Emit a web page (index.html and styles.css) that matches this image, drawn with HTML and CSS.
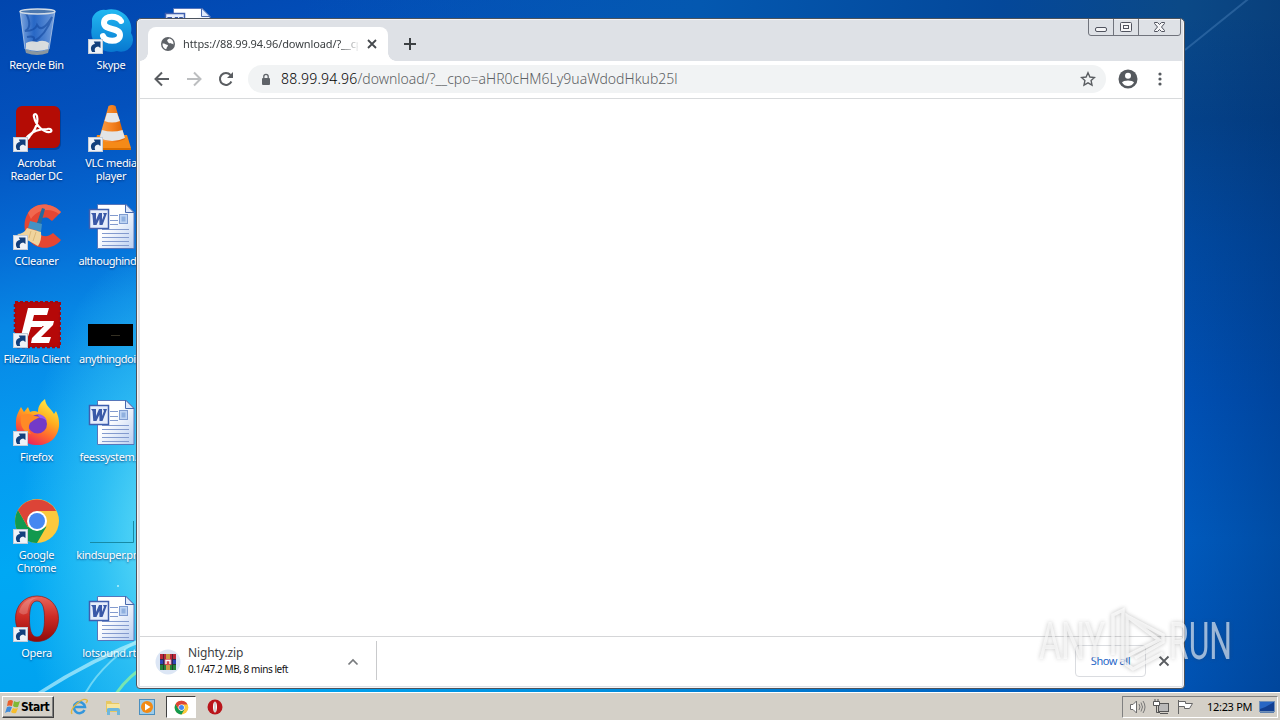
FILE: index.html
```html
<!DOCTYPE html>
<html lang="en">
<head>
  <meta charset="UTF-8">
  <title>Desktop</title>
  <link rel="stylesheet" href="styles.css">
</head>
<body>

  <svg class="defs" width="0" height="0">
    <defs>
      <linearGradient id="gSkype" x1="0" y1="0" x2="0" y2="1"><stop offset="0" stop-color="#22b9f2"/><stop offset="1" stop-color="#0878d0"/></linearGradient>
      <linearGradient id="gPage" x1="0" y1="0" x2="1" y2="1"><stop offset="0.4" stop-color="#fff"/><stop offset="1" stop-color="#b8cdf0"/></linearGradient>
      <linearGradient id="gCone" x1="0" y1="0" x2="1" y2="0"><stop offset="0" stop-color="#f9a04a"/><stop offset="0.5" stop-color="#f58220"/><stop offset="1" stop-color="#d96000"/></linearGradient>
      <linearGradient id="gOpera" x1="0" y1="0" x2="0" y2="1"><stop offset="0" stop-color="#e8675c"/><stop offset="0.45" stop-color="#cf2c25"/><stop offset="1" stop-color="#8f0a0a"/></linearGradient>
      <linearGradient id="gFox" x1="0.8" y1="0" x2="0.3" y2="1"><stop offset="0" stop-color="#fff04a"/><stop offset="0.4" stop-color="#ffae20"/><stop offset="0.7" stop-color="#ff6430"/><stop offset="1" stop-color="#e82060"/></linearGradient>
      <linearGradient id="gBin" x1="0" y1="0" x2="1" y2="0"><stop offset="0" stop-color="#bcd3f2" stop-opacity="0.7"/><stop offset="0.4" stop-color="#4f86d8" stop-opacity="0.5"/><stop offset="1" stop-color="#a9c5ee" stop-opacity="0.7"/></linearGradient>

      <symbol id="arrow" viewBox="0 0 15 15">
        <rect x="0.5" y="0.5" width="14" height="14" fill="#eef2f8" stroke="#c3ccd8"/>
        <path d="M4.200 13C1.800 9.500 3 5.600 7 5L5.800 2.500H12.500V9L10.200 7.600C7.600 7.800 6 9.800 7.200 13Z" fill="#123f7c"/>
      </symbol>

      <symbol id="word" viewBox="0 0 48 48">
        <path d="M10.500 1.500H39L47 9.500V45.500H10.500Z" fill="url(#gPage)" stroke="#5676ba"/>
        <path d="M38.500 1V9.500H47Z" fill="#dfe9fb" stroke="#4768ad"/>
        <path d="M23 12.500H31M23 17.500H31M23 21.500H31M15 26.500H42M15 30.500H42M15 34.500H42M15 38.500H42M15 42.500H42" stroke="#829ace"/>
        <rect x="32.500" y="11.500" width="8" height="9" fill="#bed4f3" stroke="#7e9bd0"/>
        <rect x="34.500" y="13.500" width="4" height="5" fill="#8fb0df"/>
        <rect x="2.500" y="6.500" width="19" height="19" fill="#e6edfb" stroke="#3f5fae" stroke-width="1.500"/>
        <path d="M4 10H9L9 17L12 10H15L15 17L17 12L16 10H20L15.500 22H12.500L12.300 16L9.500 22H6.300L5.500 12Z" fill="#3a59a8"/>
      </symbol>

      <symbol id="chrome" viewBox="0 0 48 48">
        <circle cx="24" cy="24" r="22" fill="#fbc93d"/>
        <path d="M5 13A22 22 0 0 0 24 46L33.500 29.500L24 34L14.500 29.500Z" fill="#12994e"/>
        <path d="M5 13L14.500 29.500L20 24L24 14H43.100A22 22 0 0 0 5 13Z" fill="#dc4437"/>
        <circle cx="24" cy="24" r="10" fill="#fff"/>
        <circle cx="24" cy="24" r="8" fill="#4688f1"/>
      </symbol>

      <symbol id="opera" viewBox="0 0 48 48">
        <path fill-rule="evenodd" d="M24 1C37 1 45.500 11 45.500 23.500S37 46.500 24 46.500S2.500 36 2.500 23.500S11 1 24 1ZM24 6C18 6 16.500 14 16.500 24S18 42 24 42S31.500 34 31.500 24S30 6 24 6Z" fill="url(#gOpera)" stroke="#8d1717" stroke-width="0.700"/>
        <path d="M6 17C9 5 20 2 25 3C17 3 15 12 14.500 18C12 20 8 20 6 17Z" fill="#fff" opacity="0.200"/>
      </symbol>
    </defs>
  </svg>

  <div class="desktop">
    <svg class="streaks" width="1280" height="692" viewBox="0 0 1280 692">
      <path d="M38 694Q90 660 150 637" stroke="#d6fbff" stroke-width="3.500" opacity="0.600" fill="none"/>
      <path d="M85 694Q102 662 150 632" stroke="#a5eff8" stroke-width="2" opacity="0.600" fill="none"/>
      <path d="M116 694Q126 678 150 662" stroke="#8df0a0" stroke-width="3" opacity="0.800" fill="none"/>
      <path d="M1185 50L1252 -4" stroke="#5d93cb" stroke-width="2" opacity="0.350"/>
      <circle cx="118" cy="586" r="1" fill="#b9f2fb"/>
    </svg>

    <div class="icons">
      <div class="column">
        <div class="icon">
          <svg viewBox="0 0 48 48">
            <path d="M7 4L12 42Q24 49 36 42L42 4Z" fill="url(#gBin)" stroke="#b3c9e8" stroke-width="0.800"/>
            <path d="M13 6Q20 20 12 24Q22 24 24 18Q29 27 39 10Q33 28 20 35Q24 28 14 30" fill="none" stroke="#12479f" stroke-width="2" opacity="0.600"/>
            <path d="M13 36Q18 33 24 35Q30 32 36 36L35 42Q24 46 13 42Z" fill="#e9e7df" opacity="0.900"/>
            <path d="M12 42Q24 47 36 42L35 46Q24 50 13 46Z" fill="#8b979f"/>
            <ellipse cx="24.500" cy="4.500" rx="17.500" ry="2.500" fill="#4d78ae" stroke="#d3dce6" stroke-width="1.300"/>
          </svg>
          <span>Recycle Bin</span>
        </div>
        <div class="icon">
          <svg viewBox="0 0 48 48">
            <rect x="3" y="2" width="45" height="43" rx="6" fill="#002d76" opacity="0.500"/>
            <rect x="3" y="1" width="44" height="42" rx="6" fill="#b40c05"/>
            <path d="M13 33C20 30 26 19 24 11C23 8 20 9 21 12C23 21 31 28 37 27C40 26 38 23 34 24C26 24 19 27 15 31C11 35 14 36 17 31" fill="none" stroke="#fff" stroke-width="2.200"/>
            <use href="#arrow" x="0" y="32" width="15" height="15"/>
          </svg>
          <span>Acrobat<br>Reader DC</span>
        </div>
        <div class="icon">
          <svg viewBox="0 0 48 48">
            <path d="M48 9C37-2 21 0 15 10C8 21 12 38 23 43C32 47 43 44 48 37L40 30C35 35 26 34 24 27C22 19 28 13 35 15L39 18Z" fill="#e64632"/>
            <path d="M48 9C37-2 21 0 15 10L18 16C25 5 38 5 46 11Z" fill="#f1684f"/>
            <path d="M29 5L32 6L28 21L24 20Z" fill="#246b9e"/>
            <path d="M17 18L29 21L28 29L15 25Z" fill="#4293c5"/>
            <path d="M14 25L28 29Q29 37 25 43L16 38L4 31Q11 31 14 25Z" fill="#f0d49d"/>
            <path d="M18 28L16 35M23 29L20 38" stroke="#dcb878"/>
            <use href="#arrow" x="0" y="32" width="15" height="15"/>
          </svg>
          <span>CCleaner</span>
        </div>
        <div class="icon">
          <svg viewBox="0 0 48 48">
            <rect x="2" y="1" width="45" height="45" fill="#b50808" stroke="#a30810" stroke-width="2.500" stroke-dasharray="3 2"/>
            <path d="M15 7H36L34 14H21L19.500 20H31L29 26H18L14 39H7Z" fill="#fff"/>
            <path d="M26 20H41L40 24L28 36H38L36 42H18L19 37L31 25H25Z" fill="#fff"/>
            <use href="#arrow" x="0" y="32" width="15" height="15"/>
          </svg>
          <span>FileZilla Client</span>
        </div>
        <div class="icon">
          <svg viewBox="0 0 48 48">
            <path d="M25 46C10 46 2 36 3 23C3 16 6 12 8 8L11 13L15 8L17 13Q21 11 25 13C25 7 28 3 32 0C33 8 38 9 41 15L43 12C51 28 43 46 25 46Z" fill="url(#gFox)"/>
            <circle cx="24.500" cy="25" r="9.500" fill="#733ac8"/>
            <path d="M8 17Q15 13 22 17L27 18Q22 20 17 24Q14 30 18 35Q6 32 8 17Z" fill="#ff8a26"/>
            <path d="M24 15Q32 15 34 23Q32 19 27 19Z" fill="#9a5bf0"/>
            <use href="#arrow" x="0" y="32" width="15" height="15"/>
          </svg>
          <span>Firefox</span>
        </div>
        <div class="icon">
          <svg viewBox="0 0 48 48">
            <use href="#chrome" width="48" height="48"/>
            <use href="#arrow" x="0" y="32" width="15" height="15"/>
          </svg>
          <span>Google<br>Chrome</span>
        </div>
        <div class="icon">
          <svg viewBox="0 0 48 48">
            <use href="#opera" width="48" height="48"/>
            <use href="#arrow" x="0" y="32" width="15" height="15"/>
          </svg>
          <span>Opera</span>
        </div>
      </div>

      <div class="column">
        <div class="icon">
          <svg viewBox="0 0 48 48">
            <path d="M5 12A12 12 0 0 1 19 3A20 20 0 0 1 44 26A12 12 0 0 1 30 44A20 20 0 0 1 5 20Z" fill="url(#gSkype)"/>
            <path d="M34 14C32 9 17 7 17 16C17 24 33 20 33 28C33 36 18 35 16 29" fill="none" stroke="#fff" stroke-width="6" stroke-linecap="round"/>
            <use href="#arrow" x="1" y="32" width="15" height="15"/>
          </svg>
          <span>Skype</span>
        </div>
        <div class="icon">
          <svg viewBox="0 0 48 48">
            <path d="M10 30H40L44 43H7Z" fill="#f58a18"/>
            <path d="M7 43H44V45H7Z" fill="#d96d00"/>
            <path d="M21.500 1Q25 -1 28.500 1L38 34Q25 41 12 34Z" fill="url(#gCone)"/>
            <path d="M20 8H30L33 16Q25 19 17.500 16Z" fill="#e8e8e8"/>
            <path d="M15 25Q25 28 35.500 25L38 33Q25 39 12.500 33Z" fill="#e2e4e6"/>
            <use href="#arrow" x="1" y="32" width="15" height="15"/>
          </svg>
          <span>VLC media<br>player</span>
        </div>
        <div class="icon file-icon">
          <svg viewBox="0 0 48 48"><use href="#word" width="48" height="48"/></svg>
          <span>althoughind...</span>
        </div>
        <div class="icon file-icon">
          <svg viewBox="0 0 48 48"><path d="M1 23H46V45H1Z"/><path d="M24 34.500H33" stroke="#343023"/></svg>
          <span>anythingdoi...</span>
        </div>
        <div class="icon">
          <svg viewBox="0 0 48 48"><use href="#word" width="48" height="48"/></svg>
          <span>feessystem...</span>
        </div>
        <div class="icon">
          <svg viewBox="0 0 48 48"><path d="M3 45.500H46.500V24" fill="none" stroke="#178aa5"/></svg>
          <span>kindsuper.png</span>
        </div>
        <div class="icon">
          <svg viewBox="0 0 48 48"><use href="#word" width="48" height="48"/></svg>
          <span>lotsound.rtf</span>
        </div>
      </div>

      <div class="column">
        <div class="icon">
          <svg viewBox="0 0 48 48"><use href="#word" width="48" height="48"/></svg>
        </div>
      </div>
    </div>

    <div class="window">
      <div class="tabstrip">
        <div class="tab">
          <svg width="16" height="16" viewBox="0 0 16 16">
            <circle cx="8" cy="8" r="7" fill="#5f6368"/>
            <path d="M2.500 7.500C4 7.200 5 7.500 6 8.500C8 8.500 8.500 9.500 7.500 10.500C6.500 11 7 12.500 6 13.200C3.800 12.500 2.200 10.500 2.500 7.500Z" fill="#fff"/>
            <path d="M9.500 2.600C8 3 7 4 7.200 5C8.200 5.500 7.500 6.500 9 7C10 8 12 7 13.500 8.500C13.800 5.500 12 3.200 9.500 2.600Z" fill="#fff"/>
          </svg>
          <span class="tab-title">https://88.99.94.96/download/?__cpo</span>
          <svg class="tab-close" width="10" height="10" viewBox="0 0 10 10"><path d="M1 1L9 9M9 1L1 9" stroke="#45494d" stroke-width="1.800"/></svg>
        </div>
        <svg class="new-tab" width="14" height="14" viewBox="0 0 14 14"><path d="M7 1V13M1 7H13" stroke="#3c4043" stroke-width="2"/></svg>
        <svg class="controls" width="94" height="18" viewBox="0 0 94 18">
          <path d="M0.500 0V14Q0.500 16.500 3 16.500H90Q92.500 16.500 92.500 14V0M25.500 0V16M50.500 0V16" fill="none" stroke="#70737c"/>
          <g fill="#f5f5f7" stroke="#50535e">
            <rect x="7.500" y="8.500" width="11" height="4" rx="1.500"/>
            <rect x="32.500" y="3.500" width="11" height="9" rx="1"/>
            <rect x="35.500" y="6.500" width="5" height="3"/>
            <path d="M66.500 3.500H69.500L71.500 5.500L73.500 3.500H76.500V4.500L73.500 8L76.500 11.500V12.500H73.500L71.500 10.500L69.500 12.500H66.500V11.500L69.500 8L66.500 4.500Z"/>
          </g>
        </svg>
      </div>

      <div class="toolbar">
        <svg width="16" height="16" viewBox="0 0 16 16"><path d="M15 8H2M8 1.500L1.500 8L8 14.500" fill="none" stroke="#5a5d61" stroke-width="2"/></svg>
        <svg width="16" height="16" viewBox="0 0 16 16"><path d="M1 8H14M8 1.500L14.500 8L8 14.500" fill="none" stroke="#bcbec0" stroke-width="2"/></svg>
        <svg width="16" height="16" viewBox="0 0 16 16"><path d="M13.400 10.500A6 6 0 1 1 12.500 4" fill="none" stroke="#5a5d61" stroke-width="2"/><path d="M15 1V7H9Z" fill="#5a5d61"/></svg>
        <div class="omnibox">
          <svg width="10" height="13" viewBox="0 0 10 13"><rect x="1" y="5" width="8" height="7" rx="1" fill="#5f6368"/><path d="M2.800 5V3.500A2.200 2.200 0 0 1 7.200 3.500V5" fill="none" stroke="#5f6368" stroke-width="1.300"/></svg>
          <span class="url"><b>88.99.94.96</b>/download/?__cpo=aHR0cHM6Ly9uaWdodHkub25l</span>
          <svg class="star" width="16" height="16" viewBox="0 0 16 16"><path d="M8 1.800L9.900 6L14.500 6.500L11.100 9.600L12 14.100L8 11.800L4 14.100L4.900 9.600L1.500 6.500L6.100 6Z" fill="none" stroke="#5a5d61" stroke-width="1.400"/></svg>
        </div>
        <svg class="avatar" width="20" height="20" viewBox="0 0 20 20"><circle cx="10" cy="10" r="9.500" fill="#55595e"/><circle cx="10" cy="6.700" r="3" fill="#fff"/><path d="M4 13.500C5 10.800 15 10.800 16 13.500C14.500 16 12.500 17 10 17S5.500 16 4 13.500Z" fill="#fff"/></svg>
        <svg width="4" height="16" viewBox="0 0 4 16" fill="#55595e"><circle cx="2" cy="3" r="1.600"/><circle cx="2" cy="8" r="1.600"/><circle cx="2" cy="13" r="1.600"/></svg>
      </div>

      <div class="page"></div>

      <div class="downloads">
        <div class="download">
          <svg width="26" height="26" viewBox="0 0 26 26">
            <circle cx="13" cy="13" r="12.500" fill="#dce6f5"/>
            <rect x="5" y="5" width="16" height="5" fill="#b9283b"/>
            <rect x="5" y="10" width="16" height="5" fill="#2f45b5"/>
            <rect x="5" y="15" width="16" height="6" fill="#248239"/>
            <path d="M5 10.500H21M5 15.500H21M8.500 5V21M17.500 5V21" stroke="#27212c" opacity="0.700"/>
            <rect x="11" y="5" width="4" height="16" fill="#c99a46"/>
            <rect x="9.500" y="10" width="7" height="6" fill="#d74852"/>
            <path d="M11 15V11.500H15V15" fill="none" stroke="#fff" stroke-width="1.400"/>
          </svg>
          <div class="download-text">
            <div class="file">Nighty.zip</div>
            <div class="status">0.1/47.2 MB, 8 mins left</div>
          </div>
          <svg class="chevron" width="12" height="8" viewBox="0 0 12 8"><path d="M1.500 6.500L6 2L10.500 6.500" fill="none" stroke="#777a7d" stroke-width="1.700"/></svg>
        </div>
        <button class="show-all">Show all</button>
        <svg class="bar-close" width="12" height="12" viewBox="0 0 12 12"><path d="M1.500 1.500L10.500 10.500M10.500 1.500L1.500 10.500" stroke="#5a5d61" stroke-width="1.800"/></svg>
      </div>
    </div>

    <svg class="watermark" width="210" height="76" viewBox="0 0 210 76">
      <g class="mark">
        <text x="3" y="55" textLength="66" lengthAdjust="spacingAndGlyphs">ANY</text>
        <text x="133" y="55" textLength="63" lengthAdjust="spacingAndGlyphs">RUN</text>
        <path class="play" d="M77 51V11L87 6V58L97 65L127 49M91 12V52L123 36ZM91 12L127 31V38L99 54"/>
      </g>
    </svg>
  </div>

  <div class="taskbar">
    <div class="start">
      <svg width="16" height="16" viewBox="0 0 16 16"><path d="M3 2Q6 0 8 2L7 7Q4 6 2 7Z" fill="#e8602c"/><path d="M9 2Q12 4 15 2L13 8Q10 9 8 7Z" fill="#80b836"/><path d="M2 8Q4 7 7 8L5 13Q3 12 0 14Z" fill="#3f8cda"/><path d="M8 9Q10 10 13 9L11 14Q8 15 6 13Z" fill="#f6bd2c"/></svg>
      <span>Start</span>
    </div>
    <div class="task">
      <svg width="18" height="18" viewBox="0 0 18 18"><path d="M14.500 12A5.500 5.500 0 1 1 15 9H5" fill="none" stroke="#3396dc" stroke-width="2.500"/><path d="M2 16C-1 11 12-1 17 2C18 3 16 5 16 5" fill="none" stroke="#e4b73b" stroke-width="1.400"/></svg>
    </div>
    <div class="task">
      <svg width="18" height="18" viewBox="0 0 18 18"><path d="M2 3H7L8 5H15V14H2Z" fill="#e7c862"/><path d="M3 6H16V13H3Z" fill="#f8e69e"/><path d="M3 17V11Q3 10 5 10H14Q16 10 16 12V17H13V13H6V17Z" fill="#6fb7dc"/></svg>
    </div>
    <div class="task">
      <svg width="18" height="18" viewBox="0 0 18 18"><rect x="1.500" y="1.500" width="15" height="15" fill="#9dccea" stroke="#4a8fbf"/><circle cx="9" cy="9" r="6" fill="#f28a15"/><path d="M7 5.500L12.500 9L7 12.500Z" fill="#fff"/></svg>
    </div>
    <div class="task active"><svg width="15" height="15" viewBox="0 0 48 48"><use href="#chrome"/></svg></div>
    <div class="task">
      <svg width="16" height="16" viewBox="0 0 16 16"><circle cx="8" cy="8" r="7.500" fill="#b9151b"/><ellipse cx="8" cy="8" rx="2" ry="5.500" fill="#fff"/><path d="M8 3V13" stroke="#aaa"/></svg>
    </div>
    <div class="tray">
      <svg width="17" height="16" viewBox="0 0 17 16"><path d="M1.500 5.500H4L7.500 2V14L4 10.500H1.500Z" fill="#fff" stroke="#6d6d6d"/><path d="M10 5Q12 8 10 11M12 3.500Q15 8 12 12.500M14 2Q18 8 14 14" fill="none" stroke="#777"/></svg>
      <svg width="17" height="16" viewBox="0 0 17 16"><rect x="5.500" y="4.500" width="10" height="8" fill="#b9b9b9" stroke="#555"/><path d="M7 14.500H15M3.500 7V13.500H7" stroke="#555" fill="none"/><path d="M0.500 2.500H6.500V6.500H0.500ZM2 0V3M5 0V3" fill="#fff" stroke="#555"/></svg>
      <svg width="17" height="16" viewBox="0 0 17 16"><path d="M1.500 1V15M2 2.500H8.500V4.500H15.500L12.500 9.500H7.500V7.500H2" fill="#fff" stroke="#666"/></svg>
      <span>12:23 PM</span>
      <svg class="show-desktop" width="16" height="13" viewBox="0 0 16 13"><rect x="0.500" y="0.500" width="15" height="10" fill="#2866c4" stroke="#7190b8"/><path d="M1 8Q8 6 15 1V10H1Z" fill="#123f91"/><path d="M1 11.500H15" stroke="#5c7fae"/></svg>
    </div>
  </div>

</body>
</html>
```

FILE: styles.css
```css
body {
  margin: 0;
  width: 1280px;
  height: 720px;
  overflow: hidden;
  font-family: "Noto Sans", sans-serif;
  font-size: 11px;
  display: flex;
  flex-direction: column;
}
svg {
  display: block;
  flex-shrink: 0;
}
.defs {
  position: absolute;
}
.desktop {
  position: relative;
  height: 692px;
  overflow: hidden;
  background:
    radial-gradient(ellipse 150px 300px at 170px 540px, #68e0f6 0%, rgba(70, 207, 245, 0.6) 50%, transparent 100%),
    linear-gradient(90deg, transparent 1184px, rgba(0, 35, 90, 0.25) 1280px),
    linear-gradient(90deg, transparent 300px, #0458b0 700px, #04489a 1000px, #0b4987 1180px) 0 0 / 100% 20px no-repeat,
    linear-gradient(90deg, transparent 300px, #0090e0 600px, #0060c0 1000px, #0052b2 1180px) 0 100% / 100% 6px no-repeat,
    linear-gradient(180deg, #0b4987 0, #04428a 120px, #0149a0 240px, #0050b4 400px, #005abd 540px, #0052b2 692px) 100% 0 / 110px 692px no-repeat,
    linear-gradient(168deg, #0146ae 0, #0351bd 130px, #0569d3 235px, #0787e5 320px, #069bf0 440px, #00a8f4 560px, #00a2ef 700px);
}
.streaks {
  position: absolute;
  top: 0;
  left: 0;
}
.icons {
  display: flex;
  padding-top: 7px;
}
.column {
  width: 74px;
}
.column:first-child {
  width: 73px;
}
.column:last-child {
  margin-left: 2px;
}
.icon {
  height: 98px;
  display: flex;
  flex-direction: column;
  align-items: center;
  gap: 3px;
  color: #fff;
  line-height: 13px;
  text-align: center;
  white-space: nowrap;
  letter-spacing: -0.3px;
  text-shadow: 0 1px 2px rgba(0, 30, 90, 0.7);
}
.file-icon {
  letter-spacing: -0.5px;
}
.column + .column {
  margin-right: -1px;
  padding-left: 1px;
}
.icon svg {
  width: 48px;
  height: 48px;
}

/* browser window */
.window {
  position: absolute;
  left: 136px;
  top: 18px;
  width: 1049px;
  height: 671px;
  box-sizing: border-box;
  padding: 1px 2px 2px 3px;
  border: 1px solid #4b535d;
  border-radius: 5px 5px 4px 4px;
  background: #dee1e6;
  box-shadow: inset 0 0 0 1px #f5f3f5;
  display: flex;
  flex-direction: column;
}
.tabstrip {
  height: 41px;
  display: flex;
  align-items: flex-start;
}
.tab {
  position: relative;
  margin: 7px 0 0 8px;
  width: 240px;
  height: 34px;
  box-sizing: border-box;
  padding: 0 11px 0 12px;
  background: #fff;
  border-radius: 8px 8px 0 0;
  display: flex;
  align-items: center;
}
.tab::before,
.tab::after {
  content: "";
  position: absolute;
  bottom: 0;
  width: 8px;
  height: 8px;
}
.tab::before {
  left: -8px;
  background: radial-gradient(circle at 0 0, transparent 7.5px, #fff 8px);
}
.tab::after {
  right: -8px;
  background: radial-gradient(circle at 100% 0, transparent 7.5px, #fff 8px);
}
.tab-title {
  margin: -2px 0 0 7px;
  width: 175px;
  overflow: hidden;
  white-space: nowrap;
  color: #3c4043;
  letter-spacing: -0.1px;
  -webkit-mask-image: linear-gradient(90deg, #000 157px, transparent 177px);
  mask-image: linear-gradient(90deg, #000 157px, transparent 177px);
}
.tab-close {
  margin-left: auto;
}
.new-tab {
  margin: 17px 0 0 15px;
}
.controls {
  margin: -1px 0 0 auto;
}
.toolbar {
  height: 38px;
  box-sizing: border-box;
  padding: 0 20px 1px 14px;
  background: #fff;
  border-bottom: 1px solid #d8dadc;
  display: flex;
  align-items: center;
  gap: 16px;
}
.omnibox {
  margin-left: -2px;
  flex: 1;
  height: 28px;
  box-sizing: border-box;
  padding: 0 10px 0 13px;
  border-radius: 14px;
  background: #f1f3f4;
  display: flex;
  align-items: center;
}
.url {
  margin: -2px 0 0 10px;
  white-space: nowrap;
  font-size: 14px;
  font-weight: 300;
  letter-spacing: 0;
  color: #5c5f63;
}
.url b {
  font-weight: 300;
  letter-spacing: 0.2px;
  color: #000;
}
.star {
  margin-left: auto;
}
.avatar {
  margin: 0 4px 0 -4px;
}
.page {
  flex: 1;
  background: #fff;
}
.downloads {
  height: 50px;
  box-sizing: border-box;
  border-top: 1px solid #d5d6d8;
  background: #fff;
  display: flex;
  align-items: center;
}
.download {
  width: 237px;
  height: 39px;
  box-sizing: border-box;
  margin-top: -2px;
  padding: 2px 17px 0 15px;
  border-right: 1px solid #c9cacc;
  display: flex;
  align-items: center;
}
.download-text {
  margin-left: 7px;
  margin-top: -2px;
}
.file {
  font-size: 12px;
  line-height: 18px;
  letter-spacing: -0.1px;
  color: #3c4043;
}
.status {
  font-size: 10px;
  line-height: 15px;
  letter-spacing: -0.42px;
  color: #111;
}
.chevron {
  margin-left: auto;
}
.show-all {
  margin-left: auto;
  margin-top: -1px;
  width: 71px;
  height: 32px;
  padding: 0 0 2px;
  border: 1px solid #dadce0;
  border-radius: 4px;
  background: #fff;
  color: #2768c8;
  font-family: inherit;
  font-size: 11px;
  letter-spacing: -0.4px;
}
.bar-close {
  margin: -2px 12px 0 12px;
}
.watermark {
  position: absolute;
  left: 1036px;
  top: 604px;
}
.mark {
  font-family: Roboto, sans-serif;
  font-size: 52px;
  fill: rgba(255, 255, 255, 0.6);
  filter: drop-shadow(0 0 2px rgba(60, 60, 60, 0.45));
}
.play {
  fill: none;
  stroke: rgba(255, 255, 255, 0.7);
  stroke-width: 3.5;
}

/* taskbar */
.taskbar {
  height: 28px;
  box-sizing: border-box;
  padding: 2px 2px 1px;
  background: #d4d0c8;
  border-top: 1px solid #fff;
  display: flex;
  align-items: center;
}
.start {
  width: 52px;
  height: 22px;
  box-sizing: border-box;
  padding-left: 2px;
  border: 1px solid;
  border-color: #fff #404040 #404040 #fff;
  box-shadow: inset -1px -1px #808080;
  display: flex;
  align-items: center;
  margin-right: 10px;
}
.start span {
  font-family: "DejaVu Sans Condensed", sans-serif;
  font-weight: bold;
  font-size: 12px;
  letter-spacing: -0.5px;
}
.task {
  width: 30px;
  height: 22px;
  box-sizing: border-box;
  margin-right: 4px;
  display: flex;
  align-items: center;
  justify-content: center;
}
.task.active {
  background: #fff;
  border: 1px solid;
  border-color: #404040 #fff #fff #404040;
}
.tray {
  margin-left: auto;
  width: 156px;
  height: 22px;
  box-sizing: border-box;
  padding: 0 2px 0 6px;
  border: 1px solid;
  border-color: #808080 #fff #fff #808080;
  display: flex;
  align-items: center;
  gap: 7px;
}
.tray span {
  margin: -1px 0 0 6px;
  white-space: nowrap;
  letter-spacing: -0.3px;
}
.show-desktop {
  margin-left: auto;
}
```
